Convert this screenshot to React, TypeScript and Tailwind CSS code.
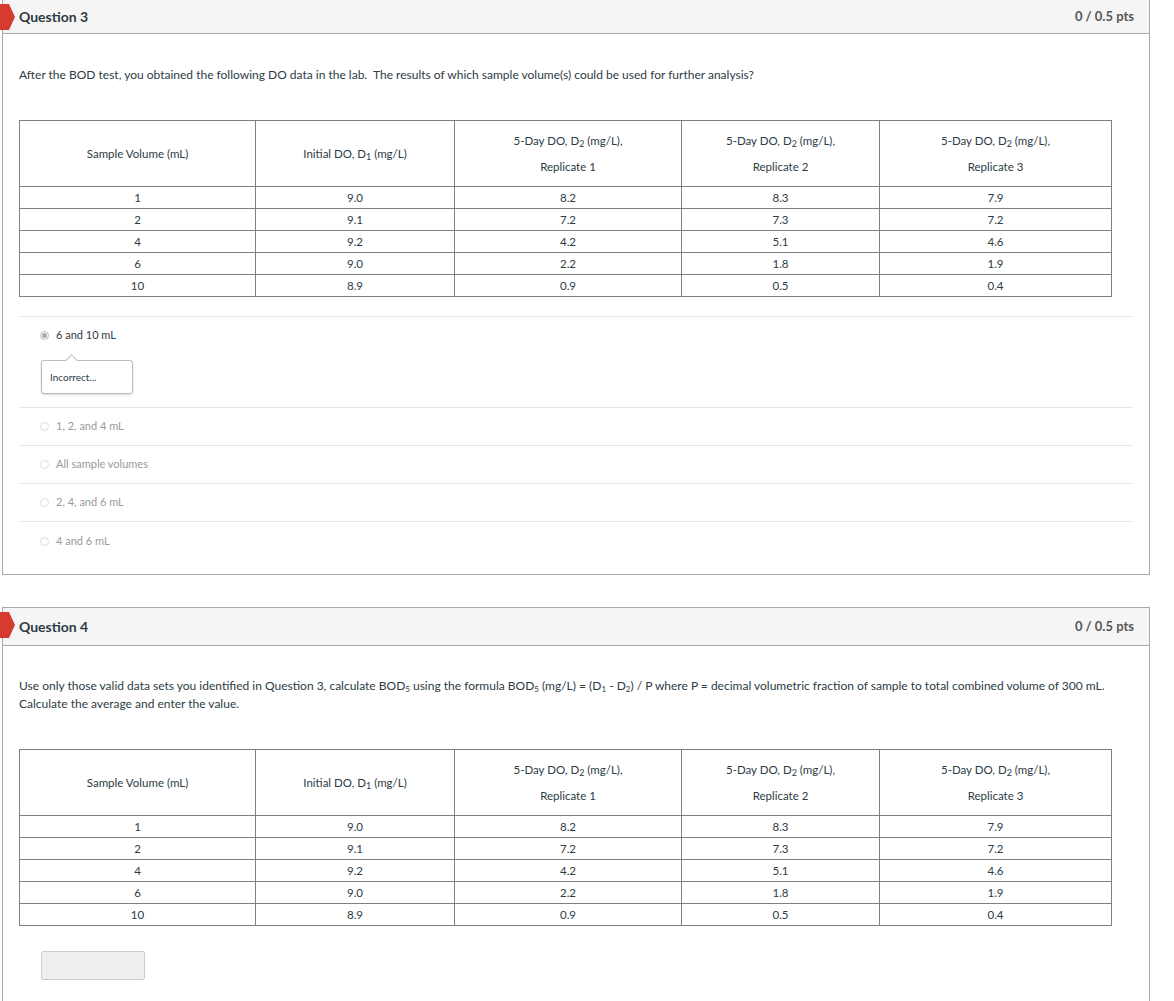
const rows = [
  ["1", "9.0", "8.2", "8.3", "7.9"],
  ["2", "9.1", "7.2", "7.3", "7.2"],
  ["4", "9.2", "4.2", "5.1", "4.6"],
  ["6", "9.0", "2.2", "1.8", "1.9"],
  ["10", "8.9", "0.9", "0.5", "0.4"],
]

function DataTable() {
  const rep = (n: number, w: string) => (
    <th className={`border border-[#808080] font-normal py-0 ${w}`}>
      <div className="leading-[26px]">
        5-Day DO, D<sub className="text-[9px]">2</sub> (mg/L),
      </div>
      <div className="leading-[26px]">Replicate {n}</div>
    </th>
  )
  return (
    <table className="border-collapse text-[11.5px] text-[#2d3b45] text-center w-[1092px] table-fixed">
      <thead>
        <tr className="h-[66px]">
          <th className="border border-[#808080] font-normal w-[236px]">Sample Volume (mL)</th>
          <th className="border border-[#808080] font-normal w-[199px]">
            Initial DO, D<sub className="text-[9px]">1</sub> (mg/L)
          </th>
          {rep(1, "w-[227px]")}
          {rep(2, "w-[198px]")}
          {rep(3, "w-[232px]")}
        </tr>
      </thead>
      <tbody>
        {rows.map((r, i) => (
          <tr key={i} className="h-[22px]">
            {r.map((c, j) => (
              <td key={j} className="border border-[#808080] p-0">{c}</td>
            ))}
          </tr>
        ))}
      </tbody>
    </table>
  )
}

function Header({ n }: { n: number }) {
  return (
    <div className="relative flex items-center justify-between h-[34px] bg-[#f5f5f5] border-b border-[#aaaaaa] pl-[16px] pr-[15px]">
      <svg className="absolute left-[-3px] top-[4px]" width="16" height="26" viewBox="0 0 16 26">
        <path d="M0 0 H9 L15 13 L9 26 H0 Z" fill="#d63b2f" />
      </svg>
      <span className="text-[14px] font-bold text-[#2d3b45]">Question {n}</span>
      <span className="text-[13px] font-bold text-[#555]">0 / 0.5 pts</span>
    </div>
  )
}

function Option({ label, last }: { label: string; last?: boolean }) {
  return (
    <div className={`flex items-center h-[38px] pl-[21px] text-[11px] ${last ? "" : "border-b border-[#e6e6e6]"}`}>
      <span className="w-[9px] h-[9px] rounded-full border border-[#ddd] mr-[7px]" />
      <span className="text-[#9a9a9a]">{label}</span>
    </div>
  )
}

export default function App() {
  return (
    <div className="bg-white min-h-[1001px] pl-[2px] w-[1174px]" style={{ fontFamily: "Lato, 'Open Sans', sans-serif" }}>
      <div className="w-[1148px] border border-[#aaaaaa] border-t-0">
        <Header n={3} />
        <div className="px-[16px] pt-[32px] pb-[14px]">
          <p className="text-[12px] text-[#2d3b45]">
            After the BOD test, you obtained the following DO data in the lab.&nbsp; The results of which sample volume(s) could be used for further analysis?
          </p>
          <div className="mt-[36px] mb-[19px]">
            <DataTable />
          </div>
          <div className="border-t border-[#e6e6e6]">
            <div className="flex items-center h-[36px] pl-[21px] text-[11px] text-[#2d3b45]">
              <span className="w-[9px] h-[9px] rounded-full border border-[#bbb] mr-[7px] flex items-center justify-center">
                <span className="w-[5px] h-[5px] rounded-full bg-[#aaa]" />
              </span>
              6 and 10 mL
            </div>
            <div className="relative pl-[22px] pt-[7px] pb-[13px] border-b border-[#e6e6e6]">
              <div className="relative w-[92px] h-[34px] border border-[#bbb] rounded-[3px] bg-white shadow-[0_1px_2px_rgba(0,0,0,0.15)] flex items-center pl-[8px] text-[10px] text-[#2d3b45]">
                Incorrect...
                <span className="absolute left-[25px] top-[-5px] w-[9px] h-[9px] bg-white border-l border-t border-[#bbb] rotate-45" />
              </div>
            </div>
            <Option label="1, 2, and 4 mL" />
            <Option label="All sample volumes" />
            <Option label="2, 4, and 6 mL" />
            <Option label="4 and 6 mL" last />
          </div>
        </div>
      </div>

      <div className="mt-[32px] w-[1148px] border border-[#aaaaaa] border-b-0 h-[397px]">
        <div className="[&>div]:h-[38px]">
          <Header n={4} />
        </div>
        <div className="px-[16px] pt-[31px]">
          <p className="text-[12px] leading-[18px] text-[#2d3b45]">
            Use only those valid data sets you identified in Question 3, calculate BOD<sub className="text-[8px]">5</sub> using the formula BOD<sub className="text-[8px]">5</sub> (mg/L) = (D<sub className="text-[8px]">1</sub> - D<sub className="text-[8px]">2</sub>) / P where P = decimal volumetric fraction of sample to total combined volume of 300 mL.
            <br />
            Calculate the average and enter the value.
          </p>
          <div className="mt-[36px]">
            <DataTable />
          </div>
          <div className="mt-[25px] ml-[22px] w-[104px] h-[29px] bg-[#eeeeee] border border-[#cccccc] rounded-[2px]" />
        </div>
      </div>
    </div>
  )
}
